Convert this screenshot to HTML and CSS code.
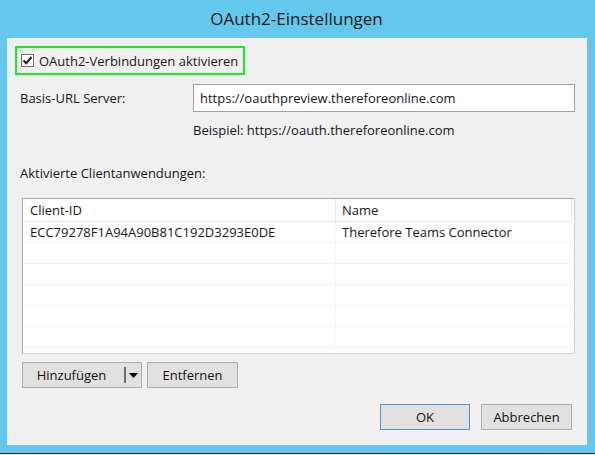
FILE: index.html
```html
<!DOCTYPE html>
<html lang="de">
<head>
<meta charset="utf-8">
<title>OAuth2-Einstellungen</title>
<link rel="stylesheet" href="styles.css">
</head>
<body>
<div class="window">
  <div class="titlebar">OAuth2-Einstellungen</div>
  <div class="client">
    <div class="enable-box">
      <span class="checkbox">
        <svg width="11" height="11" viewBox="0 0 11 11"><path d="M1.5 5.5 L4.2 8.3 L9.5 2" fill="none" stroke="#1a1a1a" stroke-width="2"/></svg>
      </span>
      <span class="enable-label">OAuth2-Verbindungen aktivieren</span>
    </div>
    <div class="url-row">
      <span class="label">Basis-URL Server:</span>
      <div class="textbox">https://oauthpreview.thereforeonline.com</div>
    </div>
    <div class="hint">Beispiel: https://oauth.thereforeonline.com</div>
    <div class="section-label">Aktivierte Clientanwendungen:</div>
    <div class="listview">
      <div class="lv-row lv-header">
        <div class="c1">Client-ID</div>
        <div class="c2">Name</div>
      </div>
      <div class="lv-row"><div class="c1">ECC79278F1A94A90B81C192D3293E0DE</div><div class="c2">Therefore Teams Connector</div></div>
      <div class="lv-row"><div class="c1"></div><div class="c2"></div></div>
      <div class="lv-row"><div class="c1"></div><div class="c2"></div></div>
      <div class="lv-row"><div class="c1"></div><div class="c2"></div></div>
      <div class="lv-row"><div class="c1"></div><div class="c2"></div></div>
      <div class="lv-row"><div class="c1"></div><div class="c2"></div></div>
    </div>
    <div class="list-buttons">
      <div class="btn split">
        <span class="split-text">Hinzufügen</span>
        <span class="split-sep"></span>
        <svg class="split-arrow" width="9" height="5" viewBox="0 0 9 5"><path d="M0 0 H9 L4.5 5 Z" fill="#000"/></svg>
      </div>
      <div class="btn remove">Entfernen</div>
    </div>
    <div class="dialog-buttons">
      <div class="btn ok">OK</div>
      <div class="btn cancel">Abbrechen</div>
    </div>
  </div>
  <div class="frame-bottom"></div>
</div>
</body>
</html>
```
FILE: styles.css
```css
html, body {
  margin: 0;
  padding: 0;
}
body {
  width: 595px;
  height: 455px;
  overflow: hidden;
  background: #ececec;
  font-family: "Open Sans", "Noto Sans", sans-serif;
  font-size: 13px;
  color: #161616;
}
.window {
  background: #63c8eb;
  display: flex;
  flex-direction: column;
  height: 453px;
  border-bottom: 1px solid #2b2b2b;
}
.titlebar {
  height: 38px;
  line-height: 38px;
  text-align: center;
  font-size: 17px;
  color: #1a1a1a;
  padding-right: 2px;
}
.client {
  margin: 0 8px 0 7px;
  height: 407px;
  background: #f0f0f0;
  display: flex;
  flex-direction: column;
  box-sizing: border-box;
}
.enable-box {
  margin: 8px 0 0 8px;
  width: 230px;
  height: 29px;
  box-sizing: border-box;
  border: 2px solid #1ee81e;
  display: flex;
  align-items: center;
  padding-left: 4px;
  line-height: 18px;
}
.checkbox {
  width: 13px;
  height: 13px;
  box-sizing: border-box;
  border: 1px solid #707070;
  background: #fff;
  display: flex;
  align-items: center;
  justify-content: center;
  margin-right: 5px;
}
.checkbox svg { display: block; }
.url-row {
  display: flex;
  align-items: center;
  margin-top: 9px;
  height: 28px;
  line-height: 18px;
}
.label {
  width: 173px;
  padding-left: 13px;
}
.textbox {
  width: 382px;
  height: 28px;
  box-sizing: border-box;
  border: 1px solid #a0a0a0;
  background: #fff;
  padding-left: 6px;
  line-height: 26px;
}
.hint {
  margin: 10px 0 0 186px;
  line-height: 16px;
}
.section-label {
  margin: 27px 0 0 13px;
  line-height: 16px;
}
.listview {
  margin: 17px 0 0 15px;
  width: 553px;
  height: 156px;
  box-sizing: border-box;
  border: 1px solid #a9a9a9;
  border-right-color: #cfcfcf;
  border-bottom-color: #cfcfcf;
  background: #fff;
  padding: 0 2px 0 1px;
  overflow: hidden;
}
.lv-row {
  display: flex;
  height: 21px;
  border-bottom: 1px solid #f0f0f0;
  box-sizing: border-box;
}
.lv-row .c1 {
  width: 312px;
  box-sizing: border-box;
  border-right: 1px solid #f0f0f0;
  padding-left: 6px;
  line-height: 21px;
}
.lv-row .c2 {
  flex: 1;
  padding-left: 6px;
  line-height: 21px;
}
.lv-header {
  height: 23px;
  border-bottom: 1px solid #e5e5e5;
}
.lv-header .c1 {
  border-right: 1px solid #e5e5e5;
  line-height: 23px;
}
.lv-header .c2 {
  line-height: 23px;
  border-right: 1px solid #e5e5e5;
}
.list-buttons {
  display: flex;
  margin: 8px 0 0 15px;
  gap: 5px;
}
.btn {
  height: 26px;
  box-sizing: border-box;
  border: 1px solid #adadad;
  background: #e1e1e1;
  display: flex;
  align-items: center;
  justify-content: center;
  color: #111;
  line-height: 18px;
}
.split {
  width: 120px;
  justify-content: flex-start;
}
.split-text {
  width: 97px;
  text-align: center;
  margin-right: 4px;
}
.split-sep {
  width: 2px;
  height: 16px;
  background: #6d6d6d;
  margin-right: 3px;
}
.split-arrow { display: block; }
.remove { width: 91px; }
.dialog-buttons {
  display: flex;
  justify-content: flex-end;
  gap: 11px;
  margin: 16px 15px 0 0;
}
.ok {
  width: 90px;
  border-color: #4f94d4;
  background: #e1e1e1;
}
.cancel { width: 91px; }
.frame-bottom {
  flex: 1;
}
```
